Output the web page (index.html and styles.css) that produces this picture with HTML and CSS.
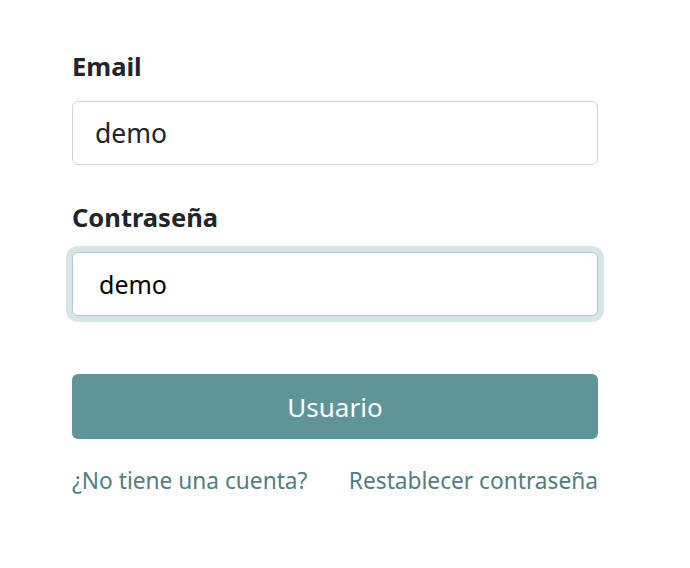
FILE: index.html
```html
<!DOCTYPE html>
<html lang="es">
<head>
<meta charset="utf-8">
<link rel="stylesheet" href="styles.css">
</head>
<body>
<form class="login">
  <div class="field">
    <label class="label" for="email">Email</label>
    <input class="input" id="email" type="text" value="demo">
  </div>
  <div class="field">
    <label class="label" for="pw">Contraseña</label>
    <input class="input input-focus" id="pw" type="text" value="demo">
  </div>
  <button class="btn" type="button">Usuario</button>
  <div class="links">
    <a class="link" href="#">¿No tiene una cuenta?</a>
    <a class="link" href="#">Restablecer contraseña</a>
  </div>
</form>
</body>
</html>
```
FILE: styles.css
```css
html, body {
  margin: 0;
  background: #fff;
}
body {
  font-family: "Noto Sans", "Open Sans", sans-serif;
  color: #212529;
}
.login {
  width: 526px;
  margin-left: 72px;
  padding-top: 48px;
  display: flex;
  flex-direction: column;
}
.field {
  display: flex;
  flex-direction: column;
  margin-bottom: 34px;
}
.label {
  font-size: 25.5px;
  font-weight: 700;
  line-height: 36px;
  margin-bottom: 17px;
}
.input {
  box-sizing: border-box;
  height: 64px;
  width: 100%;
  border: 1px solid #ced4da;
  border-radius: 6px;
  padding: 0 22px;
  font-family: inherit;
  font-size: 26.5px;
  color: #212529;
  background: #fff;
  outline: none;
}
.input-focus {
  border-color: #afcacc;
  box-shadow: 0 0 0 6px #d7e5e6;
  color: #000;
  padding-left: 26px;
  font-size: 25px;
}
.btn {
  box-sizing: border-box;
  margin-top: 24px;
  height: 65px;
  width: 100%;
  border: none;
  border-radius: 6px;
  background: #5f9599;
  color: #fff;
  font-family: inherit;
  font-size: 26px;
}
.links {
  display: flex;
  justify-content: space-between;
  margin-top: 27px;
}
.link {
  color: #4f7e83;
  text-decoration: none;
  font-size: 22.7px;
  line-height: 30px;
}
```
